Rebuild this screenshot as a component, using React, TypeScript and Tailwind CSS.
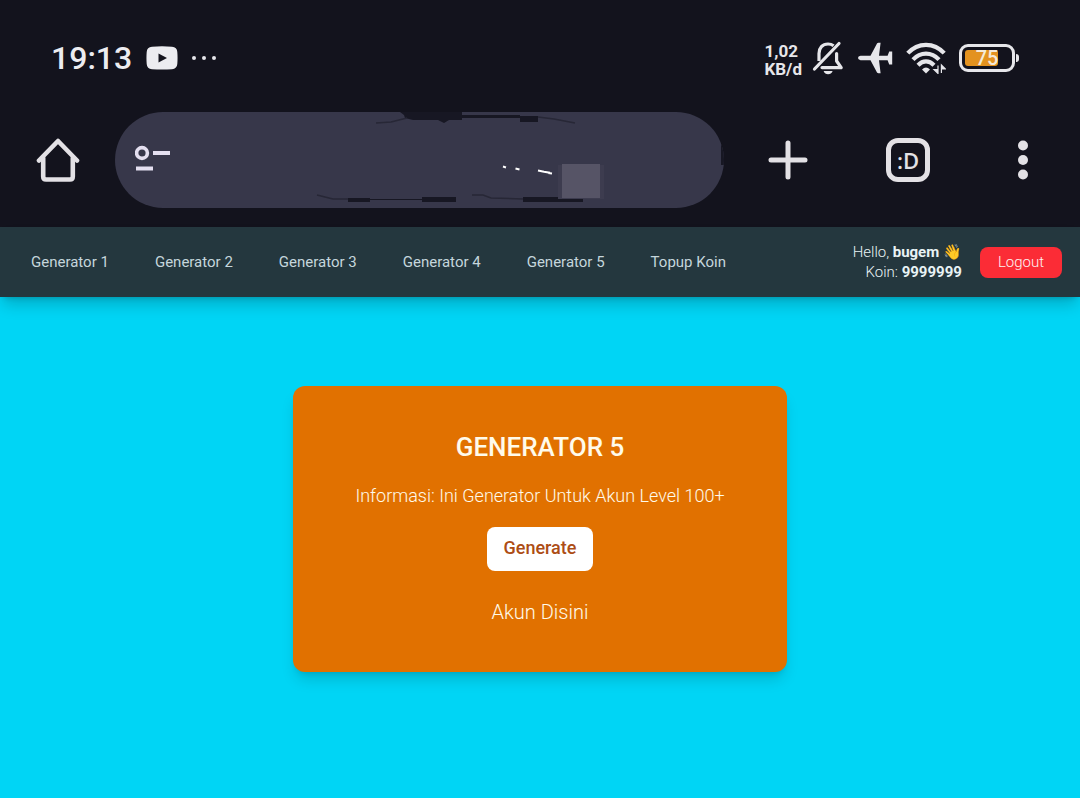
import type { ReactNode } from "react";

const NAV_ITEMS = ["Generator 1", "Generator 2", "Generator 3", "Generator 4", "Generator 5", "Topup Koin"];

function YoutubeIcon() {
  return (
    <svg width="32" height="24" viewBox="0 0 32 24" aria-hidden="true">
      <path d="M6 .8Q16-.2 26 .8Q31 1.200 31.300 6Q31.800 12 31.300 18Q31 22.600 26 23.200Q16 24 6 23.200Q1 22.800.7 18Q.2 12 .7 6Q1 1.200 6 .8z" fill="#ececf0" />
      <path d="M12.500 7.500v9l8.500-4.500z" fill="#14141e" />
    </svg>
  );
}

function MutedBellIcon() {
  return (
    <svg width="32" height="34" viewBox="0 0 32 34" fill="none" stroke="#e6e6ea" strokeWidth="3.200" aria-hidden="true">
      <path d="M7 20V12.500C7 7 10.500 3 16 3c2.400 0 4 .6 5.600 1.800" />
      <path d="M24.600 12.500v7.500l4.600 6.600H10" strokeLinejoin="round" strokeLinecap="round" />
      <path d="M2.500 28L27 2.500" strokeLinecap="round" />
      <path d="M11.600 30h9c-.8 2.200-2.400 3.200-4.500 3.200s-3.700-1-4.500-3.200z" fill="#e6e6ea" stroke="none" />
    </svg>
  );
}

function PlaneIcon() {
  return (
    <svg width="36" height="32" viewBox="0 0 36 32" fill="#e6e6ea" aria-hidden="true">
      <path d="M3.500 13.800H13.500L20 1.600Q20.500.800 21.400.800H23.600L22 13.800H30.600L32.200 9.600H35.200V22.400H32.200L30.600 18.200H22L23.600 31.200H21.400Q20.500 31.200 20 30.400L13.500 18.200H3.500Q1 17.600 1 16T3.500 13.800z" />
    </svg>
  );
}

function WifiIcon() {
  return (
    <svg width="40" height="32" viewBox="0 0 40 32" fill="none" stroke="#e6e6ea" strokeWidth="4.200" aria-hidden="true">
      <path d="M1.800 11.200C12 0 28 0 38.200 11.200" />
      <path d="M7 17.600C14.500 9.600 25.500 9.600 33 17.600" />
      <path d="M12 23.200C17 18.200 23 18.200 28 23.200" />
      <path d="M16 27.400Q20 23.600 24 27.400L20 31.400z" fill="#e6e6ea" stroke="none" />
      <path d="M32 23.500v8L28 27.500h4M35.400 31v-8L39.400 27h-4" fill="#e6e6ea" strokeWidth="1.200" />
    </svg>
  );
}

function Battery({ level }: { level: number }) {
  return (
    <div className="flex items-center gap-px">
      <div className="relative h-7 w-14 rounded-[9px] border-[3px] border-[#e6e6ea] p-[3px]">
        <div className="h-full rounded-[3px] bg-[#e3921f]" style={{ width: `${level}%` }} />
        <span className="absolute inset-0 flex items-center justify-center text-xl font-medium leading-none text-[#f4ead8]">
          {level}
        </span>
      </div>
      <span className="h-2 w-[3px] rounded-r-sm bg-[#e6e6ea]" />
    </div>
  );
}

function StatusBar() {
  return (
    <div className="flex h-28 items-center justify-between pl-[51px] pr-[61px] pt-1">
      <div className="flex items-center">
        <span className="text-[32px] font-medium leading-none text-[#ececf0]">19:13</span>
        <span className="ml-3.5">
          <YoutubeIcon />
        </span>
        <span className="ml-3.5 flex gap-1.5">
          <i className="size-1 rounded-full bg-[#e6e6ea]" />
          <i className="size-1 rounded-full bg-[#e6e6ea]" />
          <i className="size-1 rounded-full bg-[#e6e6ea]" />
        </span>
      </div>
      <div className="flex items-center">
        <div className="pt-1 text-[17px] font-bold leading-[18px] text-[#e6e6ea]">
          <p>1,02</p>
          <p>KB/d</p>
        </div>
        <div className="ml-2.5 flex items-center gap-[13px]">
          <MutedBellIcon />
          <PlaneIcon />
          <WifiIcon />
          <Battery level={75} />
        </div>
      </div>
    </div>
  );
}

function ToolButton({ label, className, children }: { label: string; className: string; children: ReactNode }) {
  return (
    <button type="button" aria-label={label} className={`flex h-11 shrink-0 items-center justify-center ${className}`}>
      {children}
    </button>
  );
}

/** Address pill whose text has been scribbled over. */
function AddressPill() {
  return (
    <div className="relative ml-[35px] mr-11 flex h-24 min-w-0 flex-1 items-center overflow-hidden rounded-full bg-[#37374a]">
      <svg className="absolute inset-0 size-full" viewBox="0 0 609 96" preserveAspectRatio="none" aria-hidden="true">
        <g fill="#171723">
          <path d="M285 0H347V3H405V4H423V10H405V6H347V8H334L329 11L323 8H298L290 6L289 3z" />
          <path d="M233 86H255V87H307V85H341V90H307V88H255V90H233z" />
          <path d="M408 85H443V87H468V90H408z" />
          <path d="M606 20h3v33h-3z" />
        </g>
        <path
          d="M261 11L276 10L292 6M423 5L439 7L460 11M202 83L218 87H233M357 83L368 83L376 86L408 87"
          fill="none"
          stroke="#272736"
          strokeWidth="1.500"
        />
        <path d="M443 53h46v34h-46z" fill="#3d3c4f" />
        <path d="M447 52h38v34h-38z" fill="#565466" />
        <path
          d="M388 54.500l3 1M400.500 56.500l4 1M423 58.500l6 1.200M429 59.700l6 1M433 61l4 .5"
          stroke="#fff"
          strokeWidth="2"
        />
      </svg>
      <svg className="mb-1 ml-5" width="36" height="27" viewBox="0 0 36 27" aria-hidden="true">
        <circle cx="7" cy="8" r="5.400" fill="none" stroke="#e4dff0" strokeWidth="3.600" />
        <path d="M18 8h17M1 23.500h17" stroke="#e4dff0" strokeWidth="4" />
      </svg>
    </div>
  );
}

function BrowserBar() {
  return (
    <div className="flex items-center pb-[19px] pl-9 pr-[42px]">
      <ToolButton label="Home" className="w-11">
        <svg width="44" height="44" viewBox="0 0 44 44" fill="none" stroke="#e3e1e5" strokeWidth="4.600" strokeLinejoin="round" strokeLinecap="round">
          <path d="M3 22.500L22 3L41 22.500" />
          <path d="M7.200 20V38.500Q7.200 41.500 10 41.500H34Q36.800 41.500 36.800 38.500V20" />
        </svg>
      </ToolButton>
      <AddressPill />
      <div className="flex items-center gap-[78px]">
        <ToolButton label="New tab" className="w-10">
          <svg width="40" height="40" viewBox="0 0 40 40" stroke="#e3e1e5" strokeWidth="5" strokeLinecap="round">
            <path d="M20 3v34M3 20h34" />
          </svg>
        </ToolButton>
        <ToolButton label="Tabs" className="w-11 rounded-xl border-[5px] border-[#e3e1e5]">
          <span className="font-['Open_Sans',sans-serif] text-[22px] font-semibold leading-none text-[#e3e1e5]">:D</span>
        </ToolButton>
        <ToolButton label="Menu" className="w-[30px]">
          <svg width="12" height="40" viewBox="0 0 12 40" fill="#e3e1e5">
            <circle cx="6" cy="5.500" r="5" />
            <circle cx="6" cy="20" r="5" />
            <circle cx="6" cy="34.500" r="5" />
          </svg>
        </ToolButton>
      </div>
    </div>
  );
}

function SiteHeader() {
  return (
    <header className="relative flex h-[70px] items-center justify-between bg-[#24373e] pl-[31px] pr-[18px] shadow-lg shadow-black/20">
      <nav className="flex gap-[46px] text-[15px] text-[#c5d6dc]">
        {NAV_ITEMS.map((item) => (
          <a key={item} href="#">
            {item}
          </a>
        ))}
      </nav>
      <div className="flex items-center gap-[18px]">
        <div className="text-right text-[15px] font-light leading-5 text-[#e8f3f5]">
          <p>
            Hello, <strong className="font-bold">bugem</strong> 👋
          </p>
          <p>
            Koin: <strong className="font-bold">9999999</strong>
          </p>
        </div>
        <button type="button" className="h-[31px] rounded-lg bg-red-500 px-[18px] text-[15px] font-light text-red-50">
          Logout
        </button>
      </div>
    </header>
  );
}

export default function App() {
  return (
    <div className="flex min-h-screen flex-col bg-[#00d5f5] font-[Roboto,sans-serif]">
      <div className="bg-[#13131d]">
        <StatusBar />
        <BrowserBar />
      </div>
      <SiteHeader />
      <main className="px-4 pt-[89px]">
        <section className="mx-auto flex max-w-[494px] flex-col items-center rounded-xl bg-amber-600 px-8 pb-[46px] pt-[45px] text-center text-amber-50 shadow-lg shadow-black/15">
          <h1 className="text-[26px] font-medium leading-8">GENERATOR 5</h1>
          <p className="mt-[21px] text-lg font-light leading-6">Informasi: Ini Generator Untuk Akun Level 100+</p>
          <button type="button" className="mt-[19px] h-11 rounded-lg bg-white px-[17px] pb-0.5 text-lg font-medium text-[#ad4d15]">
            Generate
          </button>
          <p className="mt-[27px] text-xl font-light leading-7">Akun Disini</p>
        </section>
      </main>
    </div>
  );
}
